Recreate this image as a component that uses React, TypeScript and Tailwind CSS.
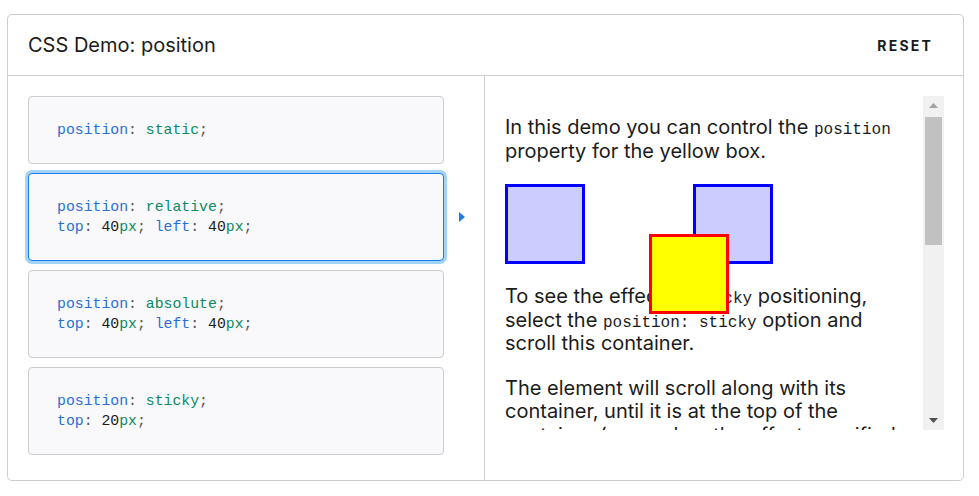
const mono = { fontFamily: '"Liberation Mono", "DejaVu Sans Mono", monospace' };

const Prop = ({ children }: { children: React.ReactNode }) => <span className="text-[#2a6fd6]">{children}</span>;
const Val = ({ children }: { children: React.ReactNode }) => <span className="text-[#0b8a62]">{children}</span>;
const Pun = ({ children }: { children: React.ReactNode }) => <span className="text-[#555]">{children}</span>;
const Num = ({ children }: { children: React.ReactNode }) => <span className="text-[#1b1b1b]">{children}</span>;

const Offset = ({ name, n }: { name: string; n: string }) => (
  <>
    <Prop>{name}</Prop>
    <Pun>:</Pun> <Num>{n}</Num>
    <Val>px</Val>
    <Pun>;</Pun>
  </>
);

const Choice = ({ value, selected, children }: { value: string; selected?: boolean; children?: React.ReactNode }) => (
  <div
    className={`w-[416px] rounded-[4px] border bg-[#f9f9fb] pl-[28px] py-[23px] text-[14.8px] leading-[20px] ${
      selected ? 'border-[#1a7ee6] shadow-[0_0_0_3px_#a3d3f7]' : 'border-[#cdcdcd]'
    }`}
    style={mono}
  >
    <div>
      <Prop>position</Prop>
      <Pun>:</Pun> <Val>{value}</Val>
      <Pun>;</Pun>
    </div>
    {children && <div>{children}</div>}
  </div>
);

const Code = ({ children }: { children: React.ReactNode }) => (
  <code className="text-[16px] leading-none text-[#1b1b1b]" style={mono}>
    {children}
  </code>
);

export default function App() {
  return (
    <div className="bg-white w-[979px] h-[496px] pt-[14px] pl-[7px]" style={{ fontFamily: 'Inter, "Noto Sans", sans-serif' }}>
      <div className="w-[957px] h-[467px] rounded-[5px] border border-[#cdcdcd] flex flex-col text-[#1b1b1b]">
        <div className="h-[61px] shrink-0 border-b border-[#cdcdcd] flex items-center justify-between pl-[20px] pr-[30px]">
          <h1 className="text-[20px] font-normal">CSS Demo: position</h1>
          <button className="text-[14px] font-bold tracking-[2.2px]">RESET</button>
        </div>
        <div className="flex flex-1 min-h-0">
          <div className="w-[477px] shrink-0 border-r border-[#cdcdcd] pl-[20px] pt-[20px] flex flex-col gap-[9px]">
            <Choice value="static" />
            <div className="flex items-center">
              <Choice value="relative" selected>
                <Offset name="top" n="40" /> <Offset name="left" n="40" />
              </Choice>
              <svg className="ml-[15px]" width="6" height="10" viewBox="0 0 6 10">
                <path d="M0 0 L6 5 L0 10 Z" fill="#1a7ee6" />
              </svg>
            </div>
            <Choice value="absolute">
              <Offset name="top" n="40" /> <Offset name="left" n="40" />
            </Choice>
            <Choice value="sticky">
              <Offset name="top" n="20" />
            </Choice>
          </div>
          <div className="flex-1 pl-[20px] pt-[20px] pr-[19px]">
            <div className="flex h-[334px]">
              <div className="flex-1 overflow-hidden text-[20px] leading-[23.5px] pr-[12px]">
                <p className="mt-[20px]">
                  In this demo you can control the <Code>position</Code> property for the yellow box.
                </p>
                <div className="flex mt-[21px] h-[80px]">
                  <div className="w-[80px] h-[80px] border-[3px] border-[#0000ff] bg-[#ccccff] shrink-0" />
                  <div className="relative z-10 left-[40px] top-[50px] ml-[24px] w-[80px] h-[80px] border-[3px] border-[#ff0000] bg-[#ffff00] shrink-0" />
                  <div className="ml-[4px] w-[80px] h-[80px] border-[3px] border-[#0000ff] bg-[#ccccff] shrink-0" />
                </div>
                <p className="mt-[21px]">
                  To see the effect of <Code>sticky</Code> positioning, select the <Code>position: sticky</Code> option and scroll
                  this container.
                </p>
                <p className="mt-[21px]">
                  The element will scroll along with its container, until it is at the top of the container (or reaches the
                  offset specified in <Code>top</Code>), and will then stop scrolling, so it stays visible.
                </p>
              </div>
              <div className="w-[21px] shrink-0 bg-[#f1f1f1] flex flex-col items-center">
                <svg className="mt-[7px]" width="9" height="5" viewBox="0 0 9 5">
                  <path d="M0 5 L4.5 0 L9 5 Z" fill="#a3a3a3" />
                </svg>
                <div className="mt-[9px] w-[17px] h-[128px] bg-[#c1c1c1]" />
                <div className="flex-1" />
                <svg className="mb-[7px]" width="9" height="5" viewBox="0 0 9 5">
                  <path d="M0 0 L9 0 L4.5 5 Z" fill="#505050" />
                </svg>
              </div>
            </div>
          </div>
        </div>
      </div>
    </div>
  );
}
